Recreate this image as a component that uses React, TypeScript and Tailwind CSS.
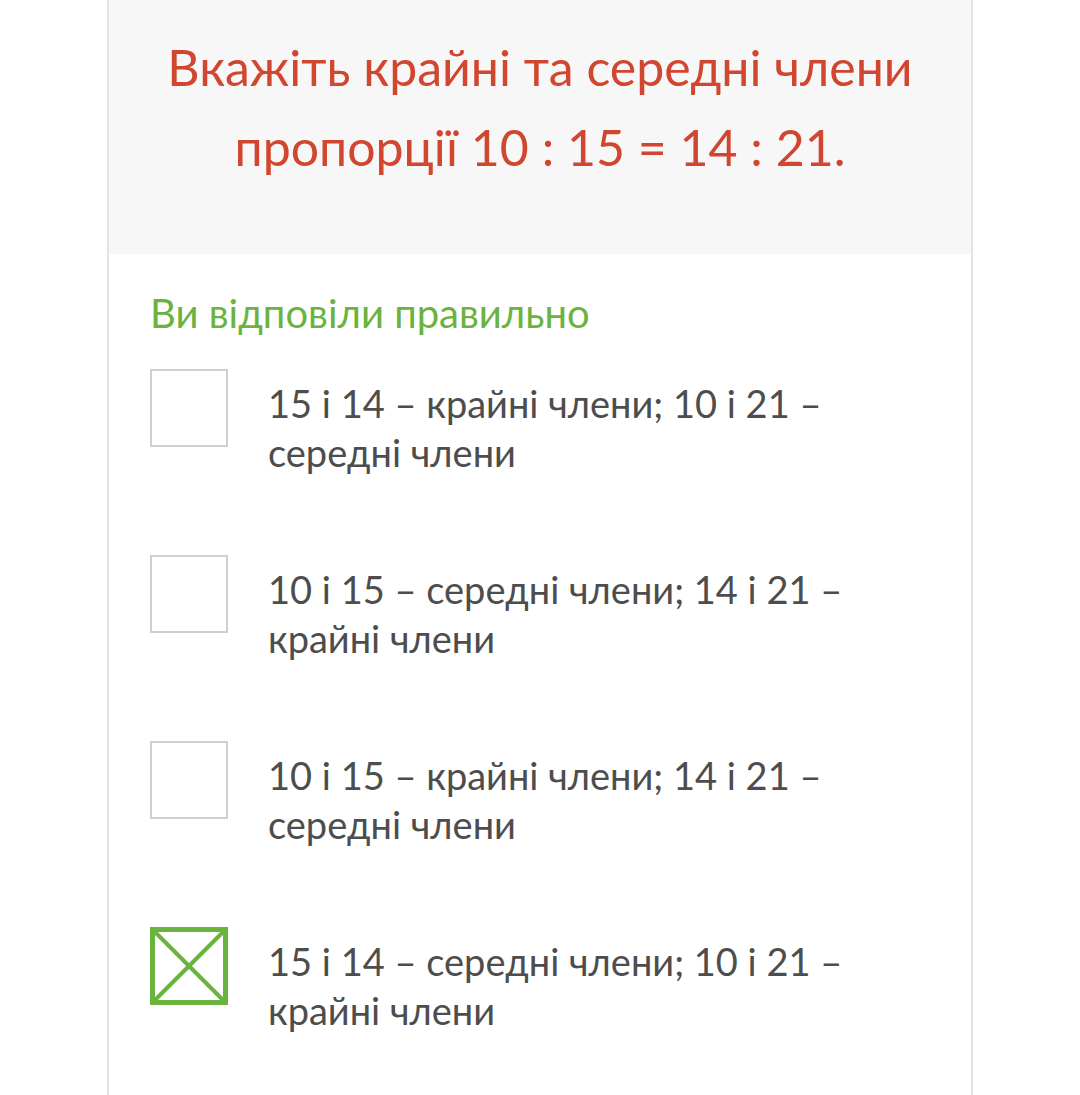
import React from 'react'

type Option = {
  id: number
  text: string
  checked: boolean
}

const options: Option[] = [
  { id: 1, text: '15 і 14 – крайні члени; 10 і 21 – середні члени', checked: false },
  { id: 2, text: '10 і 15 – середні члени; 14 і 21 – крайні члени', checked: false },
  { id: 3, text: '10 і 15 – крайні члени; 14 і 21 – середні члени', checked: false },
  { id: 4, text: '15 і 14 – середні члени; 10 і 21 – крайні члени', checked: true }
]

function CheckBox({ checked }: { checked: boolean }) {
  if (!checked) {
    return <div className="w-[78px] h-[78px] shrink-0 border-2 border-[#cfcfcf] bg-white" />
  }
  return (
    <svg width="78" height="78" viewBox="0 0 78 78" className="shrink-0">
      <rect x="2.5" y="2.5" width="73" height="73" fill="none" stroke="#6ab33e" strokeWidth="5" />
      <line x1="4" y1="4" x2="74" y2="74" stroke="#6ab33e" strokeWidth="4" />
      <line x1="74" y1="4" x2="4" y2="74" stroke="#6ab33e" strokeWidth="4" />
    </svg>
  )
}

function App() {
  return (
    <div className="min-h-screen bg-white" style={{ fontFamily: 'Lato, "Noto Sans", sans-serif' }}>
      <div className="mx-auto w-[866px] min-h-[1095px] border-x-2 border-[#e3e3e3] bg-white">
        <header className="bg-[#f7f7f7] pt-[27px] pb-[67px] px-10">
          <h1 className="text-center text-[50px] leading-[80px] text-[#d0462f]">
            Вкажіть крайні та середні члени
            <br />
            пропорції 10 : 15 = 14 : 21.
          </h1>
        </header>

        <main className="pl-[41px] pr-10 pt-[38px]">
          <p className="text-[40px] leading-[42px] text-[#6ab33e]">Ви відповіли правильно</p>

          <div className="mt-[35px] flex flex-col gap-[78px]">
            {options.map((opt) => (
              <div key={opt.id} className="flex items-start gap-10">
                <CheckBox checked={opt.checked} />
                <p className="mt-[10px] w-[640px] text-[38px] leading-[49px] text-[#4d4d4d]">{opt.text}</p>
              </div>
            ))}
          </div>
        </main>
      </div>
    </div>
  )
}

export default App
